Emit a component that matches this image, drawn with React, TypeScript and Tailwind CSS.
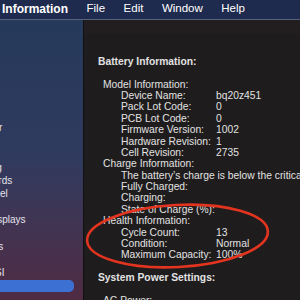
const menuItems = ["File", "Edit", "Window", "Help"];

const sidebarItems = [
  "ATA",
  "Apple Pay",
  "Audio",
  "Bluetooth",
  "Camera",
  "Card Reader",
  "Controller",
  "Diagnostics",
  "Disc Burning",
  "Ethernet Cards",
  "Fibre Channel",
  "FireWire",
  "Graphics/Displays",
  "Memory",
  "NVMExpress",
  "PCI",
  "Parallel SCSI",
  "Power",
  "Printers",
];

type Row = { label: string; value?: string; level: 0 | 1 | 2; bold?: boolean };

const rows: (Row | null)[] = [
  { label: "Battery Information:", level: 0, bold: true },
  null,
  { label: "Model Information:", level: 1 },
  { label: "Device Name:", value: "bq20z451", level: 2 },
  { label: "Pack Lot Code:", value: "0", level: 2 },
  { label: "PCB Lot Code:", value: "0", level: 2 },
  { label: "Firmware Version:", value: "1002", level: 2 },
  { label: "Hardware Revision:", value: "1", level: 2 },
  { label: "Cell Revision:", value: "2735", level: 2 },
  { label: "Charge Information:", level: 1 },
  { label: "The battery’s charge is below the critical level.", level: 2 },
  { label: "Fully Charged:", level: 2 },
  { label: "Charging:", level: 2 },
  { label: "State of Charge (%):", level: 2 },
  { label: "Health Information:", level: 1 },
  { label: "Cycle Count:", value: "13", level: 2 },
  { label: "Condition:", value: "Normal", level: 2 },
  { label: "Maximum Capacity:", value: "100%", level: 2 },
  null,
  { label: "System Power Settings:", level: 0, bold: true },
  null,
  { label: "AC Power:", level: 1 },
];

function MenuBar() {
  return (
    <div className="flex h-[20px] shrink-0 items-center gap-[18.5px] overflow-hidden whitespace-nowrap border-b border-[#59607a] bg-[#1f2b4e] pb-[2px] pl-[2px] text-white">
      <span className="-ml-[46px] text-[12px] font-bold">System Information</span>
      {menuItems.map((item) => (
        <span key={item} className="text-[11.5px]">
          {item}
        </span>
      ))}
    </div>
  );
}

function Sidebar() {
  return (
    <aside className="w-[83px] shrink-0 overflow-hidden bg-linear-to-b from-[#253a5b] via-[#303a5f] to-[#4f2b43] pt-[21.8px] text-[10px] text-[#e4e4ec]">
      <ul className="-ml-[60px] mr-[9px] whitespace-nowrap">
        <li className="flex h-[13.2px] items-center font-bold text-[#9aa0b4]">Hardware</li>
        {sidebarItems.map((item) => (
          <li key={item} className="flex h-[13.2px] items-center">
            {item === "Power" ? (
              <div className="flex h-[12px] w-full items-center rounded-[5px] bg-[#3c71d3] pl-[5px] text-white">
                {item}
              </div>
            ) : (
              <span className="pl-[5px]">{item}</span>
            )}
          </li>
        ))}
      </ul>
    </aside>
  );
}

function Report() {
  return (
    <main className="relative flex-1 overflow-hidden bg-[#1f1c1d]">
      <div className="h-[14px] bg-[#221e1f]" />
      <div className="pl-[14px] pt-[21.8px] text-[10.3px] leading-[11.4px] text-[#e2e2e2]">
        {rows.map((row, i) =>
          row === null ? (
            <div key={i} className="h-[11.4px]" />
          ) : (
            <div
              key={i}
              className={
                "flex h-[11.4px] whitespace-nowrap " +
                (row.level === 1 ? "pl-[5px]" : row.level === 2 ? "pl-[23px]" : "") +
                (row.bold ? " font-bold" : "")
              }
            >
              <span className={row.value !== undefined ? "w-[95px] shrink-0" : ""}>{row.label}</span>
              {row.value && <span>{row.value}</span>}
            </div>
          )
        )}
      </div>

      {/* hand-drawn highlight round the health section */}
      <svg className="pointer-events-none absolute inset-0 h-full w-full" viewBox="0 0 216 279">
        <ellipse
          cx="93.5"
          cy="215.5"
          rx="90.5"
          ry="31"
          transform="rotate(-3 93.5 215.5)"
          fill="none"
          stroke="#e2341f"
          strokeWidth="2.6"
        />
      </svg>
    </main>
  );
}

export default function App() {
  return (
    <div className="flex h-[300px] w-[300px] flex-col overflow-hidden bg-[#1f1c1d] font-['Liberation_Sans',Arial,sans-serif]">
      <MenuBar />
      <div className="flex min-h-0 flex-1">
        <Sidebar />
        <div className="w-px shrink-0 bg-[#101010]" />
        <Report />
      </div>
    </div>
  );
}
